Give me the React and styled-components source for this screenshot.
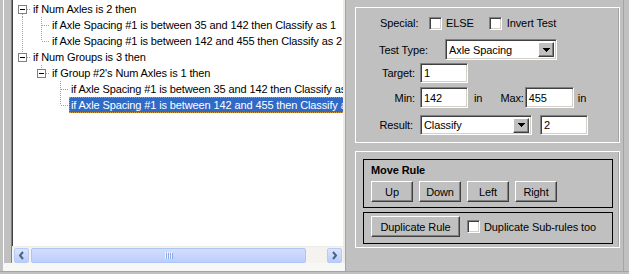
import React from 'react';
import styled, { createGlobalStyle } from 'styled-components';

const GlobalStyle = createGlobalStyle`
  html, body {
    margin: 0;
    padding: 0;
    background: #c0c0c0;
  }
  body {
    font-family: "Liberation Sans", Arial, sans-serif;
    font-size: 11px;
    letter-spacing: -0.1px;
    color: #000;
  }
  * {
    box-sizing: border-box;
  }
`;

// Window layout
const Window = styled.div`
  display: flex;
  width: 629px;
  height: 272px;
  border-bottom: 1px solid #a4a4a4;
  background: #c0c0c0;
  overflow: hidden;
`;

const LeftPane = styled.div`
  display: flex;
  flex-direction: column;
  width: 346px;
  padding-left: 3px;
  border-right: 1px solid #a4a4a4;
`;

const TreeRow = styled.div`
  display: flex;
  height: 263px;
  padding-left: 7px;
  border-left: 1px solid #fff;
`;

const BottomStrip = styled.div`
  flex: 1;
  background: #f7f7f5;
`;

// Tree view
const Tree = styled.div`
  display: flex;
  flex-direction: column;
  width: 334px;
  background: #fff;
  border-left: 1px solid #808080;
  border-right: 2px solid #ecebe6;
  box-shadow: inset 1px 0 0 #404040;
`;

const TreeList = styled.div`
  flex: 1;
  padding-top: 1px;
  overflow: hidden;
`;

const Node = styled.div`
  display: flex;
  height: 16px;
  white-space: nowrap;
`;

const NodeLabel = styled.span`
  flex: none;
  height: 16px;
  line-height: 14px;
  padding: 0 1px;
  letter-spacing: -0.12px;
  border: 1px ${(p) => (p.selected ? 'dotted #ce953a' : 'solid transparent')};
  background: ${(p) => (p.selected ? '#316ac5' : 'transparent')};
  color: ${(p) => (p.selected ? '#fff' : '#000')};
`;

const ScrollBar = styled.div`
  display: flex;
  align-items: center;
  height: 17px;
  padding: 0 1px 0 2px;
  background: #f4f3ef;
  border-top: 1px solid #eeede7;
`;

const ScrollButton = styled.div`
  display: flex;
  align-items: center;
  justify-content: center;
  width: 15px;
  height: 15px;
  margin-left: ${(p) => (p.end ? 'auto' : '0')};
  border: 1px solid #b7cbf5;
  border-radius: 2px;
  background: linear-gradient(to bottom, #dae5fe, #b9ccfa);
`;

const Thumb = styled.div`
  display: flex;
  align-items: center;
  justify-content: center;
  width: 275px;
  height: 15px;
  margin-left: 2px;
  border: 1px solid #aec4f5;
  border-radius: 2px;
  background: linear-gradient(to bottom, #d3defd, #bccefb);
`;

// Right side
const RightPane = styled.div`
  flex: 1;
`;

const RightFrame = styled.div`
  display: flex;
  flex-direction: column;
  width: 278px;
  height: 100%;
  padding: 7px 0 0 9px;
  border-right: 1px solid #a4a4a4;
`;

const Panel = styled.div`
  width: 265px;
  height: ${(p) => p.h}px;
  margin-top: ${(p) => p.mt || 0}px;
  border: 1px solid #fff;
  box-shadow: inset -1px 0 0 #a4a4a4;
  padding: ${(p) => p.pad};
`;

const FormRow = styled.div`
  display: flex;
  align-items: center;
  height: ${(p) => p.h}px;
  margin-top: ${(p) => p.mt || 0}px;
  padding-left: ${(p) => p.pl || 0}px;
`;

const Label = styled.span`
  flex: none;
  width: ${(p) => (p.w ? `${p.w}px` : 'auto')};
  text-align: ${(p) => (p.right ? 'right' : 'left')};
  margin-left: ${(p) => p.ml || 0}px;
  margin-right: ${(p) => p.mr || 0}px;
  white-space: nowrap;
`;

const CheckBox = styled.span`
  flex: none;
  display: inline-block;
  width: 13px;
  height: 13px;
  margin-left: ${(p) => p.ml || 0}px;
  background: #fff;
  border: 1px solid;
  border-color: #808080 #fff #fff #808080;
  box-shadow: inset 1px 1px 0 #404040, inset -1px -1px 0 #d4d0c8;
`;

const sunken = `
  background: #fff;
  border: 1px solid;
  border-color: #808080 #fff #fff #808080;
  box-shadow: inset 1px 1px 0 #404040, inset -1px -1px 0 #d4d0c8;
`;

const TextBox = styled.div`
  ${sunken}
  flex: none;
  display: flex;
  align-items: center;
  width: ${(p) => p.w}px;
  height: ${(p) => p.h || 20}px;
  margin-left: ${(p) => p.ml || 0}px;
  padding-left: 3px;
`;

const Select = styled.div`
  ${sunken}
  flex: none;
  display: flex;
  align-items: center;
  width: ${(p) => p.w}px;
  height: ${(p) => p.h || 21}px;
  margin-left: ${(p) => p.ml || 0}px;
  padding: 0 2px 0 3px;
`;

const SelectValue = styled.span`
  flex: 1;
`;

const DropButton = styled.span`
  display: flex;
  align-items: center;
  justify-content: center;
  width: 16px;
  height: 15px;
  background: #c0c0c0;
  border: 1px solid;
  border-color: #fff #404040 #404040 #fff;
  box-shadow: inset -1px -1px 0 #808080;
`;

const GroupBox = styled.div`
  width: 250px;
  height: ${(p) => p.h}px;
  margin-top: ${(p) => p.mt || 0}px;
  border: 1px solid #000;
  padding: 3px 7px 0;
`;

const GroupTitle = styled.div`
  font-weight: bold;
  line-height: 14px;
  margin-bottom: 4px;
`;

const ButtonRow = styled.div`
  display: flex;
  align-items: center;
  gap: 6px;
`;

const Button = styled.button`
  flex: none;
  width: ${(p) => p.w || 42}px;
  height: 21px;
  padding: 0;
  font: inherit;
  letter-spacing: inherit;
  color: #000;
  background: #c0c0c0;
  border: 1px solid;
  border-color: #fff #404040 #404040 #fff;
  box-shadow: inset -1px -1px 0 #808080;
`;

// Tree connector drawing: one 19x16 cell per indent level
const Connector = ({ up, down, right, box, pass }) => {
  const dot = { stroke: '#a0a0a0', strokeDasharray: '1 1', shapeRendering: 'crispEdges' };
  return (
    <svg width="19" height="16" viewBox="0 0 19 16" style={{ flex: 'none', display: 'block' }}>
      {pass && <line x1="10.5" y1="0" x2="10.5" y2="16" {...dot} />}
      {up && <line x1="10.5" y1="0" x2="10.5" y2={box ? 4 : 8} {...dot} />}
      {down && <line x1="10.5" y1={box ? 13 : 8} x2="10.5" y2="16" {...dot} />}
      {right && <line x1={box ? 15 : 11} y1="8.5" x2="19" y2="8.5" {...dot} />}
      {box && (
        <g shapeRendering="crispEdges">
          <rect x="6.5" y="4.5" width="8" height="8" fill="#fff" stroke="#808080" />
          <line x1="8" y1="8.5" x2="13" y2="8.5" stroke="#000" />
        </g>
      )}
    </svg>
  );
};

const nodes = [
  { level: 0, text: 'if Num Axles is 2 then', box: true, down: true, guides: [] },
  { level: 1, text: 'if Axle Spacing #1 is between 35 and 142 then Classify as 1', up: true, down: true, guides: [true] },
  { level: 1, text: 'if Axle Spacing #1 is between 142 and 455 then Classify as 2', up: true, guides: [true] },
  { level: 0, text: 'if Num Groups is 3 then', box: true, up: true, guides: [] },
  { level: 1, text: "if Group #2's Num Axles is 1 then", box: true, up: true, guides: [false] },
  { level: 2, text: 'if Axle Spacing #1 is between 35 and 142 then Classify as 1', up: true, down: true, guides: [false, false] },
  { level: 2, text: 'if Axle Spacing #1 is between 142 and 455 then Classify as 2', up: true, guides: [false, false], selected: true },
];

const LeftChevron = () => (
  <svg width="7" height="9" viewBox="0 0 7 9">
    <path d="M5 1 L2 4.5 L5 8" fill="none" stroke="#4d6185" strokeWidth="2" />
  </svg>
);

const RightChevron = () => (
  <svg width="7" height="9" viewBox="0 0 7 9">
    <path d="M2 1 L5 4.5 L2 8" fill="none" stroke="#4d6185" strokeWidth="2" />
  </svg>
);

const Grip = () => (
  <svg width="8" height="7" viewBox="0 0 8 7" shapeRendering="crispEdges">
    {[0, 2, 4, 6].map((x) => (
      <g key={x}>
        <line x1={x + 0.5} y1="0" x2={x + 0.5} y2="7" stroke="#eef3fe" />
        <line x1={x + 1.5} y1="1" x2={x + 1.5} y2="7" stroke="#8caae6" />
      </g>
    ))}
  </svg>
);

const DownArrow = () => (
  <svg width="7" height="4" viewBox="0 0 7 4" shapeRendering="crispEdges">
    <path d="M0 0 H7 L3.5 4 Z" fill="#000" />
  </svg>
);

const App = () => {
  return (
    <>
      <GlobalStyle />
      <Window>
        <LeftPane>
          <TreeRow>
            <Tree>
              <TreeList>
                {nodes.map((n, i) => (
                  <Node key={i}>
                    {n.guides.map((g, j) => (
                      <Connector key={j} pass={g} />
                    ))}
                    <Connector up={n.up} down={n.down} right box={n.box} />
                    <NodeLabel selected={n.selected}>{n.text}</NodeLabel>
                  </Node>
                ))}
              </TreeList>
              <ScrollBar>
                <ScrollButton>
                  <LeftChevron />
                </ScrollButton>
                <Thumb>
                  <Grip />
                </Thumb>
                <ScrollButton end>
                  <RightChevron />
                </ScrollButton>
              </ScrollBar>
            </Tree>
          </TreeRow>
          <BottomStrip />
        </LeftPane>

        <RightPane>
          <RightFrame>
            <Panel h={136} pad="5px 0 0 0">
              <FormRow h={20} pl={24}>
                <Label w={49}>Special:</Label>
                <CheckBox />
                <Label ml={4}>ELSE</Label>
                <CheckBox ml={15} />
                <Label ml={5}>Invert Test</Label>
              </FormRow>
              <FormRow h={21} mt={6} pl={23}>
                <Label w={66}>Test Type:</Label>
                <Select w={112}>
                  <SelectValue>Axle Spacing</SelectValue>
                  <DropButton>
                    <DownArrow />
                  </DropButton>
                </Select>
              </FormRow>
              <FormRow h={20} mt={3}>
                <Label w={59} right>Target:</Label>
                <TextBox w={48} ml={5}>1</TextBox>
              </FormRow>
              <FormRow h={21} mt={4}>
                <Label w={59} right>Min:</Label>
                <TextBox w={48} h={21} ml={5}>142</TextBox>
                <Label ml={6}>in</Label>
                <Label ml={18}>Max:</Label>
                <TextBox w={49} h={21} ml={1}>455</TextBox>
                <Label ml={4}>in</Label>
              </FormRow>
              <FormRow h={20} mt={7}>
                <Label w={57} right>Result:</Label>
                <Select w={112} h={20} ml={7}>
                  <SelectValue>Classify</SelectValue>
                  <DropButton>
                    <DownArrow />
                  </DropButton>
                </Select>
                <TextBox w={48} ml={8}>2</TextBox>
              </FormRow>
            </Panel>

            <Panel h={97} mt={8} pad="7px 0 0 7px">
              <GroupBox h={49}>
                <GroupTitle>Move Rule</GroupTitle>
                <ButtonRow>
                  <Button>Up</Button>
                  <Button>Down</Button>
                  <Button>Left</Button>
                  <Button>Right</Button>
                </ButtonRow>
              </GroupBox>
              <GroupBox h={32} mt={4}>
                <ButtonRow>
                  <Button w={89}>Duplicate Rule</Button>
                  <CheckBox ml={1} />
                  <Label ml={-2}>Duplicate Sub-rules too</Label>
                </ButtonRow>
              </GroupBox>
            </Panel>
          </RightFrame>
        </RightPane>
      </Window>
    </>
  );
};

export default App;
